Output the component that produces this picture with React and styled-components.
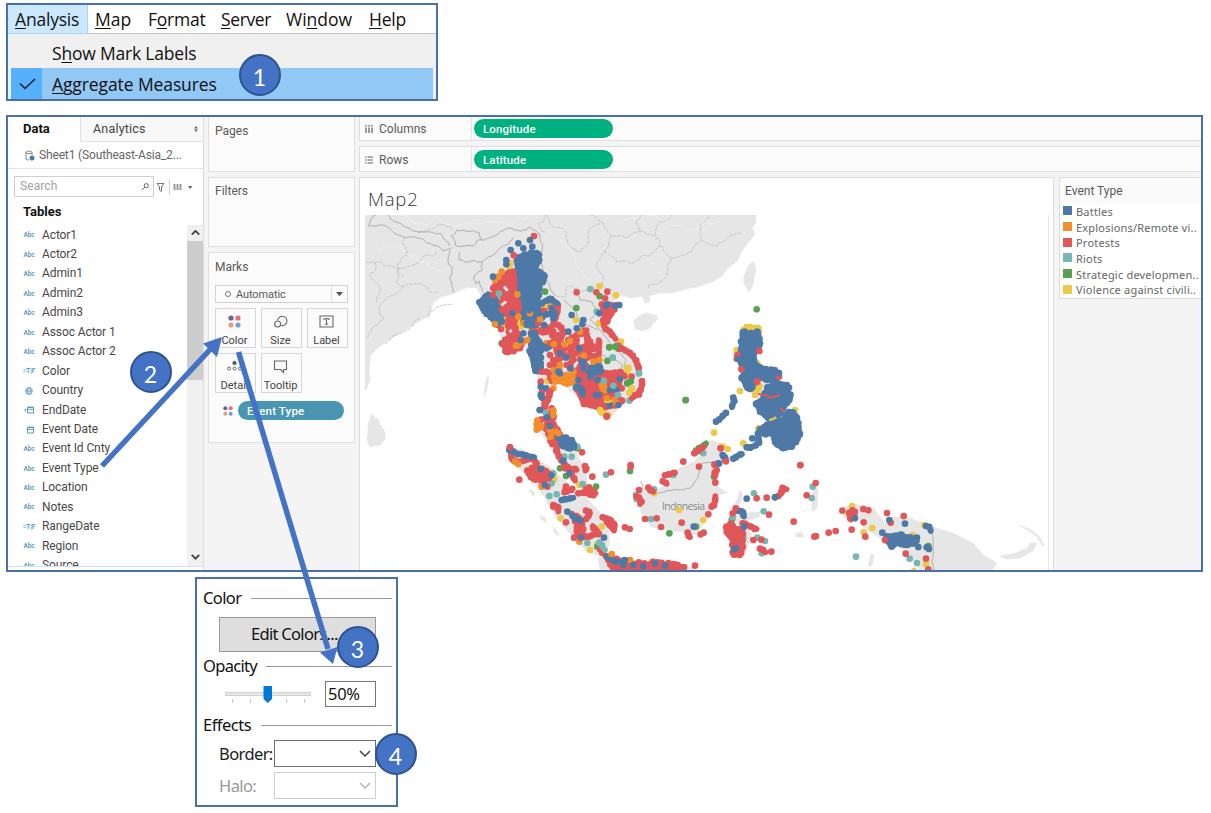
import React from "react";
import styled, { createGlobalStyle } from "styled-components";

const BLUE = "#4472c4";
const FRAME = "#4770b3";
const C = { b: "#4e79a7", o: "#f28e2b", r: "#e15759", t: "#76b7b2", g: "#59a14f", y: "#edc948" };

const Global = createGlobalStyle`
  *, *::before, *::after { box-sizing: border-box; }
  body { margin: 0; background: #fff; }
`;

const Page = styled.div`
  position: relative;
  width: 1211px;
  height: 813px;
  overflow: hidden;
  background: #fff;
  padding: 3px 0 0 6px;
  font-family: Roboto, "Liberation Sans", sans-serif;
`;

/* ---------- menu ---------- */
const MenuFrame = styled.div`
  width: 432px;
  height: 98px;
  border: 2px solid ${FRAME};
  background: #f0f0f0;
  font-family: "Open Sans", "Noto Sans", sans-serif;
  font-size: 17.5px;
  color: #111;
  u { text-decoration-thickness: 1px; text-underline-offset: 2px; }
`;
const MenuBar = styled.div`
  display: flex;
  height: 29px;
  background: #fff;
  border-bottom: 1px solid #c4c4c8;
  padding-right: 10px;
`;
const MenuItem = styled.div`
  width: ${(p) => p.$w}px;
  height: 29px;
  padding-left: 7px;
  line-height: 29px;
  letter-spacing: ${(p) => p.$ls || 0}px;
  white-space: nowrap;
  background: ${(p) => (p.$active ? "#cce8ff" : "transparent")};
  border: 1px solid ${(p) => (p.$active ? "#a9d5f5" : "transparent")};
  border-width: 0 1px 1px 0;
`;
const MenuRow = styled.div`
  display: flex;
  align-items: center;
  height: ${(p) => p.$h}px;
  margin: 0 3px;
  padding-top: ${(p) => p.$pt || 0}px;
  background: ${(p) => (p.$on ? "#91c8f6" : "transparent")};
  letter-spacing: ${(p) => p.$ls}px;
`;
const CheckCell = styled.div`
  display: flex;
  align-items: center;
  justify-content: center;
  width: 31px;
  height: 100%;
  margin-right: 10px;
  padding-left: 2px;
  background: ${(p) => (p.$on ? "#56b0fa" : "transparent")};
`;

/* ---------- workbook ---------- */
const Workbook = styled.div`
  display: flex;
  width: 1197px;
  height: 457px;
  margin-top: 14px;
  border: 2px solid ${FRAME};
  background: #f4f4f4;
  overflow: hidden;
  color: #4a4a4a;
  font-size: 12px;
`;
const Side = styled.div`
  display: flex;
  flex-direction: column;
  width: 196px;
  background: #fff;
  border-right: 1px solid #dcdcdc;
`;
const Tabs = styled.div`
  display: flex;
  height: 25px;
  flex: none;
`;
const Tab = styled.div`
  display: flex;
  align-items: center;
  justify-content: space-between;
  width: ${(p) => p.$w}px;
  padding: 0 5px ${(p) => (p.$on ? 2 : 1)}px ${(p) => p.$pl}px;
  font-size: ${(p) => (p.$on ? 13 : 12.5)}px;
  font-weight: ${(p) => (p.$on ? 700 : 400)};
  color: ${(p) => (p.$on ? "#111" : "#444")};
  letter-spacing: ${(p) => (p.$on ? 0 : 0.2)}px;
  background: ${(p) => (p.$on ? "#fff" : "#f8f8f8")};
  border: ${(p) => (p.$on ? "0" : "1px solid #e0e0e0")};
  border-top: 0;
  border-right: 0;
`;
const Source = styled.div`
  display: flex;
  align-items: center;
  gap: 4px;
  height: 27px;
  flex: none;
  padding-left: 17px;
  border-bottom: 1px solid #e3e3e3;
  color: #666;
  letter-spacing: -0.15px;
  white-space: nowrap;
`;
const SearchLine = styled.div`
  display: flex;
  align-items: center;
  height: 21px;
  flex: none;
  margin: 7px 0 0 6px;
`;
const SearchBox = styled.div`
  display: flex;
  align-items: center;
  justify-content: space-between;
  width: 140px;
  height: 21px;
  padding: 0 4px 1px 5px;
  border: 1px solid #cfcfcf;
  color: #a2a2a2;
  letter-spacing: 0.1px;
`;
const Tables = styled.div`
  flex: none;
  height: 28px;
  padding: 6px 0 0 15px;
  font-weight: 700;
  font-size: 13px;
  line-height: 18px;
  color: #111;
`;
const ListArea = styled.div`
  display: flex;
  height: 342px;
  flex: none;
  border-bottom: 1px solid #d8dfe8;
`;
const FieldList = styled.div`
  width: 179px;
  padding-top: 0.6px;
  overflow: hidden;
`;
const Field = styled.div`
  display: flex;
  align-items: center;
  height: 19.45px;
  line-height: 19.45px;
  letter-spacing: -0.1px;
  color: #484848;
`;
const FieldIcon = styled.span`
  display: flex;
  justify-content: center;
  width: 26px;
  margin: 0 0 0 8px;
  color: #4a8fae;
  font-size: 6.5px;
  font-weight: 500;
  line-height: 10px;
`;
const Scroll = styled.div`
  display: flex;
  flex-direction: column;
  align-items: center;
  width: 16px;
  background: #f0f0f0;
`;
const ScrollButton = styled.div`
  display: flex;
  align-items: center;
  justify-content: center;
  height: 16px;
`;
const Thumb = styled.div`
  width: 16px;
  height: 139px;
  margin-bottom: 169px;
  background: #cdcdcd;
`;

const Cards = styled.div`
  display: flex;
  flex-direction: column;
  gap: 5px;
  width: 147px;
  margin-left: 4px;
`;
const Card = styled.div`
  height: ${(p) => p.$h}px;
  flex: none;
  padding: ${(p) => p.$pt}px 5px 0 6px;
  border: 1px solid #dedede;
  border-top-width: ${(p) => (p.$first ? 0 : 1)}px;
  background: #fbfbfb;
`;
const CardTitle = styled.div`
  height: 16px;
  line-height: 16px;
  color: #5a5a5a;
`;
const MarkType = styled.div`
  display: flex;
  align-items: center;
  width: 133px;
  height: 18px;
  margin-top: 10px;
  padding-left: 9px;
  border: 1px solid #d2d2d2;
  font-size: 11px;
  letter-spacing: -0.1px;
  color: #5a5a5a;
`;
const Ring = styled.span`
  width: 6px;
  height: 6px;
  margin-right: 5px;
  border: 1px solid #777;
  border-radius: 50%;
`;
const DropCell = styled.span`
  display: flex;
  align-items: center;
  justify-content: center;
  width: 16px;
  height: 16px;
  margin-left: auto;
  border-left: 1px solid #dedede;
`;
const MarkGrid = styled.div`
  display: grid;
  grid-template-columns: repeat(3, 41px);
  grid-auto-rows: 40px;
  gap: 5px;
  margin-top: 5px;
`;
const MarkButton = styled.div`
  display: flex;
  flex-direction: column;
  align-items: center;
  justify-content: space-between;
  padding: 4px 2px 0 0;
  border: 1px solid #d6d6d6;
  font-size: 11px;
  line-height: 13px;
  color: #444;
`;
const Encoded = styled.div`
  display: flex;
  align-items: center;
  gap: 5px;
  margin: 8px 0 0 8px;
`;
const Pill = styled.div`
  width: ${(p) => p.$w}px;
  height: 19px;
  padding-left: 9px;
  border-radius: 10px;
  background: ${(p) => p.$bg};
  color: #fff;
  font-weight: 500;
  font-size: 11.5px;
  line-height: 20px;
  letter-spacing: 0.15px;
`;

const View = styled.div`
  display: flex;
  flex-direction: column;
  width: 842px;
  margin-left: 4px;
`;
const Shelf = styled.div`
  display: flex;
  align-items: center;
  height: ${(p) => p.$h}px;
  flex: none;
  margin-bottom: 5px;
  border: 1px solid #dedede;
  border-width: ${(p) => (p.$first ? 0 : 1)}px 0 1px 1px;
  background: #fbfbfb;
`;
const ShelfLabel = styled.div`
  display: flex;
  align-items: center;
  gap: 6px;
  width: 112px;
  height: 100%;
  margin-right: 2px;
  padding: 1px 0 0 5px;
  border-right: 1px solid #e2e2e2;
  color: #5a5a5a;
`;
const Lower = styled.div`
  display: flex;
  align-items: flex-start;
  gap: 5px;
`;
const Sheet = styled.div`
  width: 695px;
  height: 394px;
  padding-left: 5px;
  background: #fff;
  border: 1px solid #dcdcdc;
  border-bottom: 0;
`;
const SheetTitle = styled.div`
  height: 37px;
  padding: 10px 0 0 3px;
  font-family: "Open Sans", sans-serif;
  font-weight: 300;
  font-size: 18.5px;
  line-height: 22px;
  letter-spacing: 0.8px;
  color: #333;
`;
const Legend = styled.div`
  width: 142px;
  height: 122px;
  background: #fff;
  border: 1px solid #dcdcdc;
  border-right: 0;
`;
const LegendTitle = styled.div`
  height: 26px;
  padding-left: 5px;
  line-height: 26px;
  background: #fafafa;
  color: #5a5a5a;
`;
const LegendRow = styled.div`
  display: flex;
  align-items: center;
  gap: 4px;
  height: 15.7px;
  padding: 0 0 1px 3px;
  font-family: "Noto Sans", sans-serif;
  font-size: 11px;
  letter-spacing: ${(p) => p.$ls}px;
  white-space: nowrap;
  color: #666;
`;
const Swatch = styled.span`
  width: 9px;
  height: 9px;
  margin-bottom: 1px;
  background: ${(p) => p.$c};
`;

/* ---------- colour dialog ---------- */
const Dialog = styled.div`
  display: flex;
  flex-direction: column;
  width: 203px;
  height: 230px;
  margin: 5px 0 0 189px;
  padding: 6px 4px 0 6px;
  border: 2px solid ${FRAME};
  background: #fff;
  font-family: "Noto Sans", sans-serif;
  font-size: 16.5px;
  color: #111;
`;
const Group = styled.div`
  display: flex;
  align-items: center;
  gap: ${(p) => p.$gap}px;
  height: 26px;
  margin-top: ${(p) => p.$mt || 0}px;
  line-height: 24px;
  letter-spacing: ${(p) => p.$ls}px;
  &::after { content: ""; flex: 1; height: 1px; background: #999; }
`;
const EditButton = styled.div`
  width: 157px;
  height: 35px;
  margin: 6px 0 0 16px;
  padding-left: 31px;
  background: #dedede;
  border: 1px solid #9a9a9a;
  line-height: 32px;
  letter-spacing: -0.7px;
`;
const OpacityRow = styled.div`
  display: flex;
  align-items: center;
  justify-content: space-between;
  width: 151px;
  height: 26px;
  margin: 2px 0 0 22px;
`;
const Percent = styled.div`
  width: 51px;
  height: 26px;
  padding-left: 2px;
  border: 1px solid #767676;
  line-height: 24px;
  letter-spacing: -0.3px;
`;
const EffectRow = styled.div`
  display: flex;
  align-items: center;
  height: 27px;
  margin: ${(p) => p.$mt}px 0 0 16px;
  color: ${(p) => (p.$off ? "#989898" : "#1a1a1a")};
`;
const EffectLabel = styled.span`
  width: 55px;
  letter-spacing: -0.6px;
`;
const Select = styled.div`
  display: flex;
  align-items: center;
  justify-content: flex-end;
  width: 102px;
  height: 27px;
  padding-right: 4px;
  border: 1px solid ${(p) => (p.$off ? "#cfcfcf" : "#6e6e6e")};
`;

/* ---------- annotations ---------- */
const Arrows = styled.svg`
  position: absolute;
  left: 0;
  top: 0;
`;
const Step = styled.div`
  position: absolute;
  left: ${(p) => p.$x - 21}px;
  top: ${(p) => p.$y - 21}px;
  width: 42px;
  height: 42px;
  padding: 4px 1px 0 0;
  border: 2.5px solid #2f528f;
  border-radius: 50%;
  background: ${BLUE};
  color: #fff;
  font-family: Lato, sans-serif;
  font-size: 23px;
  line-height: 35px;
  text-align: center;
`;

/* ---------- map drawing ---------- */
const pairs = (s) => {
  if (!s) return [];
  const n = s.trim().split(/[\s,]+/).map(Number);
  const out = [];
  for (let i = 0; i < n.length; i += 2) out.push([n[i], n[i + 1]]);
  return out;
};

// Breaks a line into short uneven steps so it reads as a surveyed border.
const rough = (s, amp = 2.6, seed = 7) => {
  let k = seed;
  const rnd = () => {
    k = (k * 16807) % 2147483647;
    return k / 2147483647 - 0.5;
  };
  for (let i = 0; i < 4; i++) rnd();
  let pts = pairs(s);
  let a = amp;
  for (let pass = 0; pass < 3; pass++) {
    const next = [];
    for (let i = 0; i < pts.length - 1; i++) {
      const [x1, y1] = pts[i];
      const [x2, y2] = pts[i + 1];
      next.push(pts[i]);
      if (Math.hypot(x2 - x1, y2 - y1) > 3) next.push([(x1 + x2) / 2 + rnd() * a * 2, (y1 + y2) / 2 + rnd() * a * 2]);
    }
    next.push(pts[pts.length - 1]);
    pts = next;
    a /= 1.7;
  }
  return pts.map(([x, y]) => x.toFixed(1) + "," + y.toFixed(1)).join(" ");
};
const closed = (p) => p + " " + p.split(" ")[0];

const LAND = [
  "365,215 756,215 756,222 752,228 755,234 748,243 741,252 738,260 728,268 722,276 714,281 700,286 686,289 672,293 660,293 649,296 650,302 645,303 642,296 632,298 620,295 612,302 604,312 608,326 620,340 636,360 640,385 635,398 622,404 612,416 602,412 590,405 575,395 564,385 552,382 549,395 545,410 550,425 562,432 572,442 579,458 586,472 588,490 580,487 566,468 552,450 540,432 543,412 541,392 536,372 528,352 518,344 503,350 499,330 492,314 483,300 477,288 468,287 458,291 452,294 441,297 433,303 430,315 418,322 405,330 394,337 380,346 371,354 369,368 370,380 366,390 365,390",
  "372,414 378,419 384,430 385,440 379,446 370,447 367,440 368,424",
  "633,322 639,316 648,313 657,315 656,321 650,328 641,331 635,329",
  "755,262 750,264 745,274 744,284 749,292 753,284 756,270",
  "507,448 522,449 540,460 555,472 572,486 584,494 596,508 604,520 609,532 608,548 600,556 588,552 574,538 556,518 545,498 532,481 517,467",
  "598,558 618,556 640,562 670,563 694,568 694,572 600,572",
  "637,493 641,489 654,493 664,486 676,470 694,462 703,449 712,440 720,443 721,451 733,458 722,463 715,470 715,484 728,493 718,495 713,510 702,525 696,535 684,532 664,530 650,526 641,513",
  "735,508 740,490 743,494 739,506 748,513 760,512 759,517 744,522 752,536 744,556 734,556 735,532 727,522",
  "745,330 757,328 759,345 754,360 763,372 779,378 788,395 789,412 798,420 796,436 786,440 776,428 770,415 758,400 746,380 740,360",
  "843,507 854,504 874,508 878,514 885,523 893,517 907,517 933,527 953,533 973,543 983,555 997,563 992,571 920,571 908,552 880,538 864,528 858,516",
  "1000,556 1016,553 1027,548 1030,543 1037,543 1033,551 1020,558 1006,559",
  "1018,525 1030,529 1040,537 1044,546 1042,545 1037,537 1028,530",
  "795,534 802,532 804,537 796,537",
  "812,497 814,484 818,490 817,508 812,512",
  "871,554 874,555 872,566 868,566",
  "540,515 545,518 547,523 541,519",
  "530,489 535,493 534,497 530,492",
  "553,527 558,532 559,536 554,532",
  "487,377 489,377 487,388 484,397 485,386",
];

const BORDERS = [
  "369,226 382,225 398,235 415,237 428,243 443,251 452,248",
  "369,226 372,218 376,215",
  "388,215 396,222 408,228 418,232 430,232 442,235 445,240 450,246",
  "451,236 457,230 468,231 478,232 482,240 473,246 455,245 451,236",
  "482,240 494,236 508,228 520,231 530,227",
  "459,252 459,260 468,262 482,262 482,270 474,276 476,284 480,281 483,292",
  "450,250 448,262 452,270 450,280 453,293",
  "482,262 492,256 500,248 514,238",
  "530,227 540,234 542,250 540,262 546,276 550,288 556,296",
];
const MINOR = [
  "365,263 376,262 390,266 398,270 404,276",
  "398,270 410,266 424,256 436,252",
  "404,238 408,252 400,262 398,270",
  "398,270 396,282 404,286 418,284 428,290 438,292",
  "404,286 392,296 380,305 384,318 372,328 368,338",
  "418,232 440,224 452,230",
  "376,262 370,275 380,288 376,302",
  "545,215 552,225 566,232 572,248 580,252 588,244 590,228 600,222",
  "590,215 602,222 612,236 604,252 596,264 604,276 600,290",
  "612,236 626,238 640,232 655,236 660,222 672,215",
  "604,252 618,262 634,262 648,256 660,246 656,236",
  "660,246 672,258 668,270 660,282 648,288",
  "672,258 690,252 702,240 700,226 710,215",
  "702,240 716,246 728,238 742,234",
  "545,232 540,222 545,215",
  "556,296 566,294 570,286 580,292 588,288 600,286 612,290",
  "640,232 636,222 642,215",
  "428,318 436,308 452,304",
  "385,344 396,334 406,330 420,318",
];
const COUNTRY = [
  "574,288 580,300 592,302 598,312 590,320 600,330 612,345 626,360 624,368",
  "564,300 574,310 580,322 598,330",
  "598,352 612,358 622,365 624,372 612,375",
  "656,494 666,491 678,490 690,488 698,476 701,464 712,462 720,462",
  "933,527 933,545 932,562 934,570",
  "641,490 643,485 641,481",
];

// Each region keeps its own local grid: three units to one map pixel.
// areas are filled clusters, lines are chains of marks, gaps show land through
// a cluster, dots are single marks.
const REGIONS = [
  {
    at: [470, 225],
    gaps: "105,188 110,194 98,238 105,232 84,222 122,318 168,330 172,338 205,308 215,350 225,425 205,290",
    areas: [
      ["y", "80,265 150,270 165,298 130,310 85,292"],
      ["r", "72,188 100,150 145,132 152,240 168,270 104,268 92,225 75,205"],
      ["r", "116,285 130,280 138,320 158,355 150,370 108,382 100,352 118,335"],
      ["o", "245,450 265,440 275,452 312,455 325,470 290,478 258,462"],
      ["r", "332,445 385,440 435,445 450,470 430,500 458,530 440,540 400,550 342,538 322,495"],
      ["r", "395,238 430,240 425,262 412,290 400,262"],
      ["b", "142,98 165,88 205,85 210,105 194,130 212,142 226,152 222,168 205,182 208,208 200,235 208,280 192,300 165,300 160,282 164,235 152,205 148,145 140,118"],
      ["b", "28,232 54,206 70,213 78,240 92,268 96,290 80,300 60,274 38,254"],
      ["b", "183,325 195,325 207,350 210,388 207,440 195,440 184,388 182,362"],
      ["b", "340,410 358,430 382,415 395,438 366,444 342,432"],
    ],
    lines: [
      ["r", "190,318 230,322 250,300 262,262 265,240"],
      ["r", "250,320 255,360 268,400 255,420"],
      ["r", "262,355 275,375 285,395"],
      ["r", "265,300 282,322 270,345"],
      ["r", "298,345 320,330 350,315"],
      ["r", "350,330 352,360 385,372 386,345"],
      ["r", "386,380 384,400 360,395 340,365"],
      ["r", "310,362 300,385 312,405"],
      ["r", "295,345 325,365 338,385"],
      ["r", "330,402 352,400"],
      ["r", "330,425 325,450 335,470"],
      ["r", "400,285 402,305 420,320 437,342"],
      ["r", "444,362 470,378 490,395 503,420 507,440"],
      ["r", "516,468 514,490 500,510 485,520"],
      ["r", "228,440 242,450 245,470"],
      ["r", "240,500 236,520 222,545"],
      ["r", "202,590 225,580"],
      ["r", "245,550 252,575 240,595"],
      ["r", "152,262 180,275 225,258"],
      ["r", "425,450 450,440 465,455"],
      ["b", "205,240 240,220 262,235"],
      ["b", "205,280 230,268 255,265 250,282"],
      ["b", "208,355 222,365 238,366"],
      ["b", "318,488 335,490 338,510"],
      ["o", "395,480 405,498 400,465"],
      ["o", "228,355 220,370"],
    ],
    dots: {
      y: "389,183 438,211 120,115 118,125 318,285 387,295 453,350 472,435 485,490 474,428 390,555 402,565 415,570 205,350 155,300 220,240 478,503 255,245 470,445 232,468",
      g: "319,249 389,214 418,367 437,365 445,371 412,408 95,355 225,200 185,240 185,308 482,468 472,475 420,500",
      t: "361,192 87,206 428,398 507,445 443,510 478,527 378,545 228,563 402,468 430,482 380,260",
      r: "192,33 131,91 320,202 379,202 412,200 212,470 237,505 215,503 410,575 93,312 280,320 405,220 360,350 300,370 225,305 205,295 262,382 240,390 455,490 435,470 70,210 78,180 96,255 240,355 270,400 215,440 300,430 290,420 355,380 440,240 345,425 212,316 240,310 268,330 320,345 372,395 335,378 282,372 368,372 302,415 318,385 240,420 485,455 250,405",
      o: "95,140 75,165 85,155 142,208 145,275 145,360 160,350 138,362 252,357 283,358 388,405 432,525 290,450 290,475 160,295 180,265 240,245 270,420 252,435 330,320 75,298 410,520 250,490 370,410 245,560 268,432 272,460 310,440 318,465 255,470 210,282 398,490 440,535 252,455 172,345 300,348 342,392",
      b: "145,55 160,70 180,45 187,65 122,75 109,105 109,118 69,155 305,270 340,285 337,298 320,310 288,398 302,430 265,440 270,445 328,370 388,265 412,238 408,242 435,243 448,240 127,265 160,325 152,345 212,485 228,490 217,518 209,555 230,578 385,510 383,465 361,455 450,462 322,485 338,500 420,495 440,495 418,540 445,540 325,465 225,368 245,250 205,265 378,510 200,430 234,575 183,222 178,255 170,295 390,435 335,410 340,425 222,300 270,385 295,320",
    },
  },
  {
    at: [490, 390],
    areas: [
      ["r", "172,90 190,100 210,130 210,160 187,162 172,125"],
      ["b", "205,142 225,142 248,152 255,168 240,178 218,168"],
      ["r", "112,242 140,232 165,242 182,262 160,272 128,268"],
      ["r", "278,308 297,292 318,310 300,314"],
      ["r", "245,372 268,385 277,400 275,430 262,440 262,400"],
      ["r", "352,503 400,512 430,520 470,525 490,514 520,522 580,530 580,545 372,545 362,525"],
    ],
    lines: [
      ["r", "180,5 175,25 165,48"],
      ["r", "200,172 205,198 222,220 242,238 248,262 255,272"],
      ["r", "225,235 260,240"],
      ["r", "285,228 286,242"],
      ["r", "60,172 65,208 88,215 128,205 142,222"],
      ["r", "228,290 222,308 248,295"],
      ["r", "190,345 206,350 205,365"],
      ["r", "288,362 300,370 288,388"],
      ["r", "252,443 298,440 328,430 308,408"],
      ["r", "338,382 360,388 375,405 372,422 350,395"],
      ["r", "330,478 348,500"],
      ["g", "618,182 648,160"],
      ["r", "613,190 628,182 642,170"],
      ["r", "525,256 555,248"],
      ["r", "518,274 530,282"],
      ["r", "475,293 490,305"],
      ["r", "440,320 450,325 450,342"],
      ["r", "593,428 600,442"],
      ["r", "665,350 676,335 676,318"],
      ["r", "680,240 675,260"],
      ["o", "142,92 140,120 155,108"],
      ["b", "58,180 75,188 100,195 133,202"],
      ["b", "215,330 232,328 250,323"],
      ["b", "248,378 272,392"],
      ["b", "352,500 372,512 388,515"],
      ["t", "328,458 345,480"],
    ],
    dots: {
      o: "190,75 205,130 195,125 182,140 75,215 85,222 155,290 268,455 365,492 420,510 180,120 190,62",
      y: "193,267 212,385 300,480 567,360 640,390 322,463 335,410 268,285 492,310 265,400 335,68",
      t: "223,200 245,200 348,254 278,282 178,318 200,313 292,459 438,315 483,387 640,190 550,255 492,298 167,68 185,280 190,250 262,170 440,328",
      g: "587,30 420,243 318,290 538,430 618,410 210,235 322,470 672,260 262,175 228,258",
      r: "580,215 627,230 447,300 465,387 500,385 513,411 575,398 632,433 641,428 655,373 676,278 692,174 705,210 615,527 363,247 422,225 422,230 307,260 276,187 88,269 265,310 228,397 405,412 419,417 185,68 130,240 172,290 190,350 350,78 60,172 165,50 285,440 310,415",
      b: "152,237 184,256 165,285 232,365 273,443 342,443 220,212 238,250 172,82 180,108 150,60 155,22 405,510 430,525 460,528 495,520 525,527 400,525 700,198 685,220 611,410 152,15",
    },
  },
  {
    at: [680, 300],
    areas: [
      ["y", "190,90 200,82 238,84 236,100 195,105"],
      ["b", "188,98 212,100 235,95 240,130 222,160 224,192 250,205 293,215 292,238 262,242 232,228 217,262 200,265 188,235 192,208 176,175 184,140"],
      ["b", "262,262 290,248 322,255 330,298 314,318 302,338 275,357 262,352 240,335 228,308 250,300"],
      ["b", "240,388 262,372 305,362 325,335 348,345 360,400 338,437 310,447 285,430 278,400 255,402"],
    ],
    lines: [
      ["b", "160,293 160,308 156,322"],
      ["b", "108,365 122,355 138,338"],
      ["b", "200,442 220,440 238,425 235,400"],
      ["b", "160,476 175,466 186,462"],
      ["b", "128,465 137,476"],
      ["y", "228,272 240,258"],
    ],
    dots: {
      y: "170,150 232,190 180,273 345,330 235,385 102,398 190,430 128,440 143,447 225,285",
      t: "240,117",
      g: "230,28 17,300",
      r: "238,153 232,245 297,230 122,445 103,494 361,495 138,484 172,165 170,176 184,208",
      b: "217,415 117,491 240,130 297,219 232,100 194,95 185,235 318,300 358,405 175,178 300,365 270,355 183,125 330,290 228,312 285,425 335,440 205,265",
    },
  },
  {
    at: [720, 440],
    areas: [
      ["r", "20,260 35,250 45,265 65,268 68,315 65,342 40,345 38,300 22,282"],
      ["b", "500,290 530,284 560,292 592,293 582,310 560,315 540,305 515,320 505,300"],
      ["r", "388,218 400,210 405,225 393,240"],
    ],
    lines: [
      ["r", "165,172 185,160 192,145 200,148"],
      ["r", "68,250 90,258 110,267"],
      ["r", "120,326 137,337"],
      ["b", "53,212 70,215 72,230"],
      ["b", "618,258 628,262 632,273"],
      ["b", "543,312 566,315"],
    ],
    dots: {
      t: "102,160 278,140 275,174 131,214 112,293 135,303 125,340 408,350 569,356 591,369 38,232 70,295",
      y: "396,198 457,264 431,277 613,255 618,373 582,393 384,220 578,285",
      g: "542,284 36,238 590,302 625,318",
      r: "241,76 287,129 260,166 110,175 140,173 38,220 47,205 100,300 124,299 154,335 147,224 221,245 283,290 326,278 347,273 367,212 430,207 445,211 431,247 395,269 436,290 501,219 512,248 551,228 495,300 557,341 618,356 625,388 288,288",
      b: "80,176 165,172 72,260 43,328 48,325 405,235 508,240 555,251 487,278 595,321 620,322 627,327 515,320",
    },
  },
];

const Dots = ({ list, color, r = 10 }) => pairs(list).map(([x, y], i) => <circle key={i} cx={x} cy={y} r={r} fill={color} />);

const Cluster = ({ color, points, seed }) => {
  const p = rough(closed(points), 5, seed);
  return (
    <g fill={color} stroke={color} strokeLinejoin="round" strokeLinecap="round">
      <polygon points={points} strokeWidth="15" />
      <polyline points={p} strokeWidth="20" strokeDasharray="0 17 0 11 0 22" />
    </g>
  );
};

const Chain = ({ color, points, seed }) => (
  <g fill="none" stroke={color} strokeLinecap="round" strokeLinejoin="round">
    <polyline points={points} strokeWidth="17" />
    <polyline points={rough(points, 5, seed)} strokeWidth="20" strokeDasharray="0 12 0 19 0 15" />
  </g>
);

const RegionMarks = ({ region }) => (
  <g transform={"translate(" + region.at.join(" ") + ") scale(.33333)"}>
    {["y", "g", "t"].map((k) => <Dots key={k} list={region.dots[k]} color={C[k]} />)}
    {region.areas.filter((a) => a[0] !== "b").map(([k, p], i) => <Cluster key={i} color={C[k]} points={p} seed={i * 37 + 5} />)}
    {region.lines.filter((a) => a[0] !== "b").map(([k, p], i) => <Chain key={i} color={C[k]} points={p} seed={i * 29 + 3} />)}
    <Dots list={region.gaps} color="#ececec" r={5} />
    {region.areas.filter((a) => a[0] === "b").map(([k, p], i) => <Cluster key={i} color={C[k]} points={p} seed={i * 41 + 9} />)}
    {region.lines.filter((a) => a[0] === "b").map(([k, p], i) => <Chain key={i} color={C[k]} points={p} seed={i * 23 + 7} />)}
    {["r", "o", "b"].map((k) => <Dots key={k} list={region.dots[k]} color={C[k]} />)}
  </g>
);

const OVERLAY = [
  ["g", "482,469 472,475 437,365 418,367"],
  ["t", "428,398 507,445 443,510 430,482 402,468 87,206"],
  ["y", "472,435 485,490 390,555 438,211 475,430"],
];

const MapView = () => (
  <svg width="684" height="356" viewBox="365 215 684 356" style={{ display: "block" }}>
    <g fill="#e6e6e6" stroke="#e6e6e6" strokeWidth=".6">
      {LAND.map((p, i) => (
        <polygon key={i} points={i === 0 || i > 8 ? p : rough(closed(p), 1, i + 3)} />
      ))}
    </g>
    <g fill="none" strokeWidth="1.4" stroke="#ededed">
      <polyline points={rough("400,215 430,222 455,226 500,222 530,215", 5, 9)} />
      <polyline points={rough("380,250 395,245 430,268 447,270", 4, 19)} />
      <polyline points={rough("560,240 575,262 590,280", 4, 5)} />
      <polyline points={rough("620,225 650,215 690,230 720,222", 5, 29)} />
    </g>
    <g fill="none" strokeLinejoin="round">
      {MINOR.map((p, i) => <polyline key={i} points={rough(p, 2.6, 11 + i * 5)} stroke="#b9b9b9" strokeWidth=".7" strokeDasharray="4 .8" />)}
      {BORDERS.map((p, i) => <polyline key={i} points={rough(p, 1.6, 31 + i * 9)} stroke="#a0a0a0" strokeWidth=".8" />)}
      {COUNTRY.map((p, i) => <polyline key={i} points={rough(p, 1.1, 71 + i * 3)} stroke="#a0a0a0" strokeWidth=".8" />)}
    </g>
    <text x="662" y="510" fontSize="10.5" fill="#8a8a8a" fontFamily="Open Sans, sans-serif" textLength="43">Indonesia</text>
    {REGIONS.map((r, i) => <RegionMarks key={i} region={r} />)}
    <g transform="translate(470 225) scale(.33333)">
      {OVERLAY.map(([k, p]) => <Dots key={k} list={p} color={C[k]} />)}
    </g>
    <g fill="none" stroke={C.r} strokeWidth="2.2" strokeLinecap="round" strokeLinejoin="round">
      <path d="M759 394L765 395L771 398L779 395" />
      <path d="M781 409L784 411" />
    </g>
    <circle cx="757" cy="381.500" r="3.200" fill={C.r} />
    <path d="M604 401q4 3 8-1M769 420q4 0 7-3" stroke={C.y} strokeWidth="2" fill="none" />
    <path d="M1048.500 215V571M365 214.500H1048" stroke="#e6e6e6" />
  </svg>
);

/* ---------- small icons ---------- */
const Calendar = ({ calc }) => (
  <svg width="11" height="8" viewBox="0 0 11 8" fill="none" stroke="currentColor" strokeWidth=".9">
    <path d="M3.500 1.500h6v5.500h-6zM3.500 3.300h6M5 0v1.500M8 0v1.500" />
    {calc && <path d="M.5 3.500h1.500M.5 5h1.500" />}
  </svg>
);
const Globe = () => (
  <svg width="8" height="8" viewBox="0 0 8 8" fill="none" stroke="currentColor" strokeWidth=".8">
    <circle cx="4" cy="4" r="3.300" />
    <ellipse cx="4" cy="4" rx="1.500" ry="3.300" />
    <path d="M.7 4h6.600" />
  </svg>
);
const Chevron = ({ up, c = "#444", w = 12, sw = 1.5 }) => (
  <svg width={w} height={w / 2 + 1} viewBox="0 0 12 7" fill="none" stroke={c} strokeWidth={sw}>
    <path d={up ? "M1 6L6 1L11 6" : "M1 1L6 6L11 1"} />
  </svg>
);
const Caret = ({ s = 7 }) => (
  <svg width={s} height={s * 0.6} viewBox="0 0 10 6"><path d="M0 0H10L5 6Z" fill="#555" /></svg>
);
const ColorDots = ({ s = 13 }) => (
  <svg width={s} height={s} viewBox="0 0 13 13">
    <circle cx="3" cy="3" r="2.600" fill="#6d6292" />
    <circle cx="10" cy="3" r="2.600" fill="#ee6b78" />
    <circle cx="3" cy="10" r="2.600" fill="#eaa06c" />
    <circle cx="10" cy="10" r="2.600" fill="#6ba3cf" />
  </svg>
);
const MARK_ICONS = {
  Color: <svg width="15" height="17" viewBox="0 0 15 17"><g transform="translate(1 2)"><ColorDots /></g></svg>,
  Size: (
    <svg width="15" height="17" viewBox="0 0 15 17" fill="none" stroke="#666" strokeWidth="1.100">
      <path d="M4.600 7.200a4.700 4.700 0 1 1 3.600 5.300" /><circle cx="4.600" cy="11" r="3" />
    </svg>
  ),
  Label: (
    <svg width="15" height="17" viewBox="0 0 15 17" fill="none" stroke="#666" strokeWidth="1.100">
      <path d="M1 3h13v11H1zM5 7V5.700h5V7M7.500 5.700v5.500M6 11.300h3" />
    </svg>
  ),
  Detail: (
    <svg width="15" height="17" viewBox="0 0 15 17" fill="none" stroke="#666">
      <circle cx="7.500" cy="5" r="1.700" fill="#555" />
      <circle cx="2" cy="10.500" r="1.500" /><circle cx="7.500" cy="10.500" r="1.500" /><circle cx="13" cy="10.500" r="1.500" />
    </svg>
  ),
  Tooltip: (
    <svg width="15" height="17" viewBox="0 0 15 17" fill="none" stroke="#666" strokeWidth="1.100">
      <path d="M1.500 3h12v8.500H10.500V14.500L7.500 11.500h-6z" />
    </svg>
  ),
};

const FIELDS = [
  ["Actor1"], ["Actor2"], ["Admin1"], ["Admin2"], ["Admin3"], ["Assoc Actor 1"], ["Assoc Actor 2"],
  ["Color", "tf"], ["Country", "globe"], ["EndDate", "calc"], ["Event Date", "date"], ["Event Id Cnty"],
  ["Event Type"], ["Location"], ["Notes"], ["RangeDate", "tf"], ["Region"], ["Source"],
];
const fieldIcon = (k) =>
  k === "tf" ? "=T|F" : k === "globe" ? <Globe /> : k === "calc" ? <Calendar calc /> : k === "date" ? <Calendar /> : "Abc";

const LEGEND = [
  ["Battles", "b"], ["Explosions/Remote vi..", "o"], ["Protests", "r"], ["Riots", "t"],
  ["Strategic developmen..", "g"], ["Violence against civili..", "y"],
];

export default function App() {
  return (
    <Page>
      <Global />
      <MenuFrame>
        <MenuBar>
          <MenuItem $w={80} $active $ls={-0.2}><u>A</u>nalysis</MenuItem>
          <MenuItem $w={53}><u>M</u>ap</MenuItem>
          <MenuItem $w={73} $ls={-0.25}>F<u>o</u>rmat</MenuItem>
          <MenuItem $w={65} $ls={-0.4}><u>S</u>erver</MenuItem>
          <MenuItem $w={83}>Wi<u>n</u>dow</MenuItem>
          <MenuItem $w={60} $ls={-0.2}><u>H</u>elp</MenuItem>
        </MenuBar>
        <MenuRow $h={34} $pt={4} $ls={-0.2}><CheckCell /><span>S<u>h</u>ow Mark Labels</span></MenuRow>
        <MenuRow $h={31} $on $ls={-0.1}>
          <CheckCell $on>
            <svg width="17" height="12" viewBox="0 0 17 12" fill="none" stroke="#223" strokeWidth="1.600"><path d="M1 5.500L6 10.500L16 1" /></svg>
          </CheckCell>
          <span><u>A</u>ggregate Measures</span>
        </MenuRow>
      </MenuFrame>

      <Workbook>
        <Side>
          <Tabs>
            <Tab $on $w={72} $pl={15}>Data</Tab>
            <Tab $w={123} $pl={12}>
              Analytics
              <svg width="4" height="6" viewBox="0 0 4 6"><path d="M0 2.400L2 0L4 2.400ZM0 3.600H4L2 6Z" fill="#666" /></svg>
            </Tab>
          </Tabs>
          <Source>
            <svg width="10" height="11" viewBox="0 0 10 11" fill="none" stroke="#777" strokeWidth=".9">
              <path d="M1 2.500C1 .5 7 .5 7 2.500V5M1 2.500V9q1 1 3 1M1 2.500C1 4 7 4 7 2.500" />
              <circle cx="7" cy="8" r="2.500" fill="#4a7fa6" stroke="none" />
            </svg>
            Sheet1 (Southeast-Asia_2...
          </Source>
          <SearchLine>
            <SearchBox>
              Search
              <svg width="7" height="7" viewBox="0 0 7 7" fill="none" stroke="#666"><circle cx="4.300" cy="2.700" r="2.100" /><path d="M2.800 4.200L.4 6.600" /></svg>
            </SearchBox>
            <svg width="41" height="18" viewBox="1 0 41 18" fill="none" stroke="#777">
              <path d="M4 5.500h7L8.500 9v4.500L6.500 12V9Z" />
              <path d="M16.500 1V17" stroke="#d0d0d0" />
              <path d="M21.500 6v6M24.500 6v6M27.500 6v6" strokeWidth="2" stroke="#999" />
              <path d="M35 8h4.500L37.200 11Z" fill="#666" stroke="none" />
            </svg>
          </SearchLine>
          <Tables>Tables</Tables>
          <ListArea>
            <FieldList>
              {FIELDS.map(([name, kind]) => (
                <Field key={name}><FieldIcon>{fieldIcon(kind)}</FieldIcon>{name}</Field>
              ))}
            </FieldList>
            <Scroll>
              <ScrollButton><Chevron up w={9} sw={2.4} /></ScrollButton>
              <Thumb />
              <ScrollButton><Chevron w={9} sw={2.4} /></ScrollButton>
            </Scroll>
          </ListArea>
        </Side>

        <Cards>
          <Card $first $h={55} $pt={6}><CardTitle>Pages</CardTitle></Card>
          <Card $h={70} $pt={5}><CardTitle>Filters</CardTitle></Card>
          <Card $h={191} $pt={6}>
            <CardTitle>Marks</CardTitle>
            <MarkType><Ring />Automatic<DropCell><Caret /></DropCell></MarkType>
            <MarkGrid>
              {Object.keys(MARK_ICONS).map((k) => <MarkButton key={k}>{MARK_ICONS[k]}{k}</MarkButton>)}
            </MarkGrid>
            <Encoded><ColorDots s={10} /><Pill $w={106} $bg="#4996b2">Event Type</Pill></Encoded>
          </Card>
        </Cards>

        <View>
          <Shelf $first $h={24}>
            <ShelfLabel>
              <svg width="8" height="8" viewBox="0 0 8 8" stroke="#666" strokeWidth="1.300"><path d="M1 2.500V8M4 2.500V8M7 2.500V8M1 0V1.500M4 0V1.500M7 0V1.500" /></svg>
              Columns
            </ShelfLabel>
            <Pill $w={139} $bg="#00b180">Longitude</Pill>
          </Shelf>
          <Shelf $h={26}>
            <ShelfLabel>
              <svg width="8" height="8" viewBox="0 0 8 8" stroke="#666" strokeWidth="1.200"><path d="M2.500 1H8M2.500 4H8M2.500 7H8M0 1H1.500M0 4H1.500M0 7H1.500" /></svg>
              Rows
            </ShelfLabel>
            <Pill $w={139} $bg="#00b180">Latitude</Pill>
          </Shelf>
          <Lower>
            <Sheet>
              <SheetTitle>Map2</SheetTitle>
              <MapView />
            </Sheet>
            <Legend>
              <LegendTitle>Event Type</LegendTitle>
              {LEGEND.map(([name, k]) => <LegendRow key={name} $ls={0.2}><Swatch $c={C[k]} />{name}</LegendRow>)}
            </Legend>
          </Lower>
        </View>
      </Workbook>

      <Dialog>
        <Group $ls={-0.6} $gap={10}>Color</Group>
        <EditButton>Edit Colors...</EditButton>
        <Group $ls={-0.7} $gap={9} $mt={1}>Opacity</Group>
        <OpacityRow>
          <svg width="86" height="20" viewBox="0 0 86 20">
            <rect x=".5" y="8.500" width="85" height="3" fill="#e7e7e7" stroke="#d2d2d2" />
            <path d="M7.500 15v4M25.500 15v4M61.500 15v4M79.500 15v4" stroke="#c4c4c4" />
            <path d="M38.500 2h8.500v13l-4.200 4l-4.300-4z" fill="#0078d7" />
          </svg>
          <Percent>50%</Percent>
        </OpacityRow>
        <Group $ls={-0.5} $gap={10} $mt={5}>Effects</Group>
        <EffectRow $mt={2}><EffectLabel>Border:</EffectLabel><Select><Chevron c="#444" /></Select></EffectRow>
        <EffectRow $mt={5} $off><EffectLabel>Halo:</EffectLabel><Select $off><Chevron c="#b5b5b5" /></Select></EffectRow>
      </Dialog>

      <Arrows width="1211" height="813" viewBox="0 0 1211 813" fill={BLUE}>
        <path d="M102 466L211 348.500" stroke={BLUE} strokeWidth="5.500" />
        <path d="M222 337L203 343.500L217 357Z" />
        <path d="M238.500 352L328 649" stroke={BLUE} strokeWidth="5.500" />
        <path d="M333 664L320 652.500L337.500 647Z" />
      </Arrows>
      <Step $x={260} $y={75}>1</Step>
      <Step $x={151} $y={372}>2</Step>
      <Step $x={358} $y={647}>3</Step>
      <Step $x={396} $y={754}>4</Step>
    </Page>
  );
}
